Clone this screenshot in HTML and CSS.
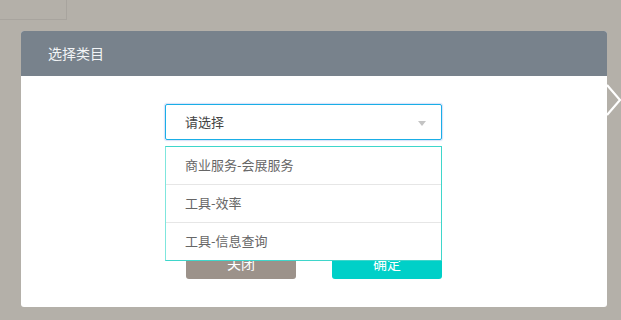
FILE: index.html
```html
<!DOCTYPE html>
<html>
<head>
    <meta charset="utf-8">
    <title>选择类目</title>
    <link rel="stylesheet" href="styles.css">
</head>
<body>
    <!-- Page behind the overlay -->
    <div class="page-tab"></div>

    <!-- Next arrow of the slider -->
    <svg class="next-arrow" width="16" height="34" viewBox="0 0 16 34">
        <polyline points="1,1 14,16 1,31" fill="none" stroke="#fff" stroke-width="2.2"/>
    </svg>

    <!-- Modal -->
    <div class="modal">
        <div class="modal-header">选择类目</div>
        <div class="modal-body">
            <div class="select">
                <div class="select-box">
                    <span>请选择</span>
                    <i class="caret"></i>
                </div>
                <ul class="options">
                    <li>商业服务-会展服务</li>
                    <li>工具-效率</li>
                    <li>工具-信息查询</li>
                </ul>
            </div>
            <div class="actions">
                <button class="btn btn-close">关闭</button>
                <button class="btn btn-ok">确定</button>
            </div>
        </div>
    </div>
</body>
</html>
```

FILE: styles.css
```css
body {
    margin: 0;
    padding: 0;
    height: 320px;
    overflow: hidden;
    position: relative;
    background: #b4b0a9;
    font-family: "Noto Sans CJK SC", "Noto Sans", sans-serif;
}

/* Page behind */
.page-tab {
    width: 66px;
    height: 19px;
    border-right: 1px solid #a8a49e;
    border-bottom: 1px solid #a8a49e;
}

.next-arrow {
    position: absolute;
    top: 84px;
    left: 606px;
}

/* Modal */
.modal {
    position: relative;
    margin: 11px 0 0 21px;
    width: 586px;
    background: #fff;
    border-radius: 3px;
    overflow: visible;
}
.modal-header {
    height: 45px;
    line-height: 45px;
    padding-left: 27px;
    background: #78828c;
    color: #f2f4f6;
    font-size: 14px;
    border-radius: 3px 3px 0 0;
}
.modal-body {
    padding: 28px 0 28px;
}

/* Select */
.select {
    position: relative;
    width: 277px;
    margin-left: 144px;
}
.select-box {
    position: relative;
    height: 34px;
    line-height: 34px;
    padding-left: 19px;
    border: 1px solid #1aaee6;
    border-radius: 2px;
    box-shadow: 0 0 1px 1px rgba(140, 170, 240, 0.35);
    font-size: 13px;
    color: #444;
}
.caret {
    position: absolute;
    right: 15px;
    top: 16px;
    width: 0;
    height: 0;
    border-left: 4px solid transparent;
    border-right: 4px solid transparent;
    border-top: 5px solid #c4c4c4;
}
.options {
    position: absolute;
    top: 42px;
    left: 0;
    width: 275px;
    margin: 0;
    padding: 0;
    list-style: none;
    background: #fff;
    border: 1px solid #3fd6cb;
    border-left-color: #7fe6dd;
    z-index: 10;
}
.options li {
    height: 37px;
    line-height: 36px;
    padding-left: 19px;
    font-size: 13px;
    color: #666;
    border-bottom: 1px solid #e6e6e6;
}
.options li:last-child {
    border-bottom: none;
}

/* Buttons */
.actions {
    display: flex;
    justify-content: center;
    gap: 36px;
    margin-top: 107px;
}
.btn {
    width: 110px;
    height: 32px;
    border: none;
    border-radius: 3px;
    color: #fff;
    font-family: inherit;
    font-size: 14px;
    padding: 0;
}
.btn-close {
    background: #9c928a;
}
.btn-ok {
    background: #00d0c8;
}
```
